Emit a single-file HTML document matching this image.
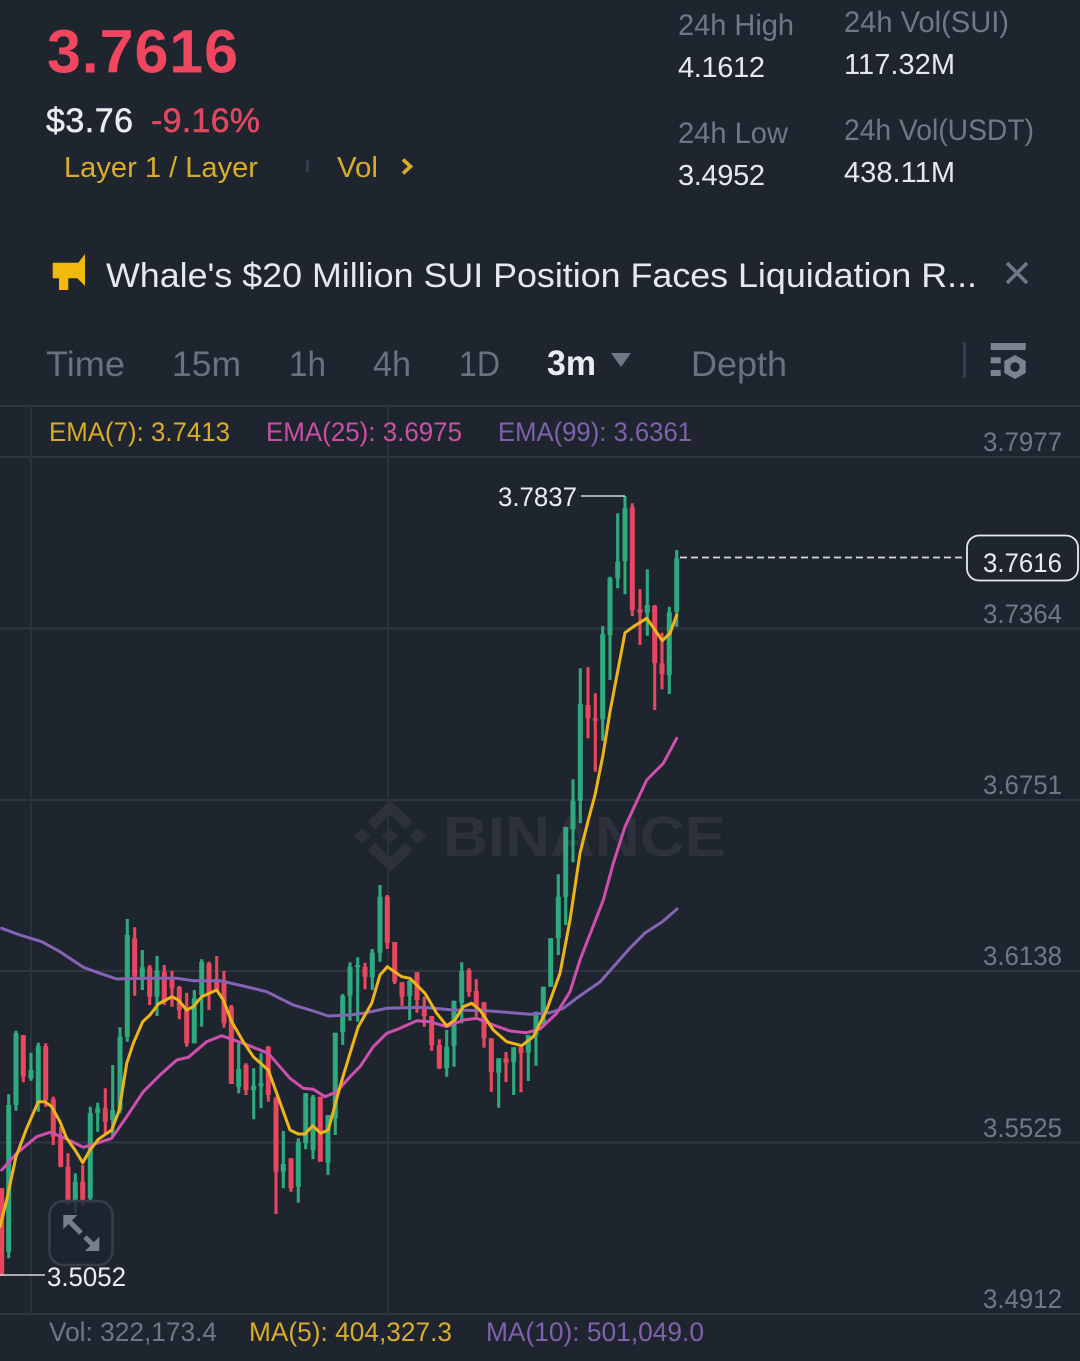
<!DOCTYPE html>
<html lang="en"><head><meta charset="utf-8"><title>SUI/USDT chart</title>
<style>
html,body{margin:0;padding:0;background:#1f252f;}
svg{display:block;font-family:"Liberation Sans",sans-serif;}
</style></head><body>
<svg width="1080" height="1361" viewBox="0 0 1080 1361" xmlns="http://www.w3.org/2000/svg">
<rect width="1080" height="1361" fill="#1f252f"/>

<!-- header -->
<g>
<text x="47" y="72.500" font-size="61" font-weight="700" fill="#f1465f" textLength="191" lengthAdjust="spacing">3.7616</text>
<text x="46" y="132" font-size="34" fill="#eaecef" stroke="#eaecef" stroke-width=".5" textLength="87" lengthAdjust="spacing">$3.76</text>
<text x="151" y="132" font-size="34" fill="#e2475f" stroke="#e2475f" stroke-width=".5" textLength="109" lengthAdjust="spacing">-9.16%</text>
<text x="64" y="177" font-size="29" fill="#d9ad2b" textLength="194" lengthAdjust="spacingAndGlyphs">Layer 1 / Layer</text>
<rect x="296" y="160" width="3" height="12" fill="#363c47" transform="translate(10,0)"/>
<text x="337" y="177" font-size="29" fill="#d9ad2b" textLength="41" lengthAdjust="spacingAndGlyphs">Vol</text>
<path d="M403 159.500L410.500 166.500L403 173.500" fill="none" stroke="#d9ad2b" stroke-width="3.600"/>

<text x="678" y="35" font-size="30" fill="#6f7885" textLength="116" lengthAdjust="spacingAndGlyphs">24h High</text>
<text x="678" y="77" font-size="29" fill="#e6e8ec" textLength="87" lengthAdjust="spacing">4.1612</text>
<text x="844" y="32" font-size="30" fill="#6f7885" textLength="165" lengthAdjust="spacingAndGlyphs">24h Vol(SUI)</text>
<text x="844" y="74" font-size="29" fill="#e6e8ec" textLength="111" lengthAdjust="spacing">117.32M</text>
<text x="678" y="143" font-size="30" fill="#6f7885" textLength="110" lengthAdjust="spacingAndGlyphs">24h Low</text>
<text x="678" y="185" font-size="29" fill="#e6e8ec" textLength="87" lengthAdjust="spacing">3.4952</text>
<text x="844" y="140" font-size="30" fill="#6f7885" textLength="190" lengthAdjust="spacingAndGlyphs">24h Vol(USDT)</text>
<text x="844" y="182" font-size="29" fill="#e6e8ec" textLength="111" lengthAdjust="spacing">438.11M</text>
</g>

<!-- announcement -->
<path d="M52.700 262.700H78.300L85 254V286L77.300 278.300H68.300V290H59V278.300H52.700Z" fill="#f0b90b"/>
<text x="106" y="287" font-size="34.500" fill="#e6e8ec" textLength="871" lengthAdjust="spacingAndGlyphs">Whale's $20 Million SUI Position Faces Liquidation R...</text>
<path d="M1007 263L1027 283M1027 263L1007 283" stroke="#6f7885" stroke-width="3.600" fill="none"/>

<!-- tabs -->
<g font-size="35" fill="#69727f">
<text x="46" y="376" textLength="79" lengthAdjust="spacingAndGlyphs">Time</text>
<text x="172" y="376" textLength="69" lengthAdjust="spacingAndGlyphs">15m</text>
<text x="289" y="376" textLength="37" lengthAdjust="spacingAndGlyphs">1h</text>
<text x="373" y="376" textLength="38" lengthAdjust="spacingAndGlyphs">4h</text>
<text x="459" y="376" textLength="41" lengthAdjust="spacingAndGlyphs">1D</text>
<text x="691" y="376" textLength="96" lengthAdjust="spacingAndGlyphs">Depth</text>
</g>
<text x="547" y="375" font-size="35" font-weight="700" fill="#eaecef" textLength="49" lengthAdjust="spacingAndGlyphs">3m</text>
<path d="M611 353H631L621 367Z" fill="#6f7885"/>
<rect x="963" y="342" width="3" height="36" fill="#373d49"/>
<g fill="#7b8492">
<rect x="990.700" y="343" width="35" height="7"/>
<rect x="990.700" y="357.300" width="10" height="6"/>
<rect x="990.700" y="370" width="10" height="6"/>
<path d="M1015 355L1025.700 361V373L1015 379L1004.300 373V361Z"/>
</g>
<circle cx="1015" cy="367" r="4.700" fill="#1f252f"/>

<!-- grid -->
<g stroke="#30363f" stroke-width="2" fill="none">
<path d="M0 406H1080M0 457H1080M0 628.500H1080M0 800H1080M0 971H1080M0 1142.500H1080M0 1314H1080"/>
<path d="M31 406V1314M388 406V1314" stroke="#2b313b"/>
</g>

<!-- watermark -->
<g fill="#2c313b">
<path d="M390 800L412.700 821.700L405 829.300L390 815L375 829.300L367.300 821.700Z"/>
<path d="M390 872L412.700 850.300L405 842.700L390 857L375 842.700L367.300 850.300Z"/>
<path d="M390 828L398 836L390 844L382 836Z"/>
<path d="M362 828L370 836L362 844L354 836Z"/>
<path d="M418 828L426 836L418 844L410 836Z"/>
<text x="443" y="856" font-size="57" font-weight="700" textLength="283" lengthAdjust="spacingAndGlyphs">BINANCE</text>
</g>

<!-- candle wicks -->
<path fill="none" stroke="#2fa97e" stroke-width="3.100" d="M8.700 1094.300V1258.300M16 1030.700V1110.700M31 1052.700V1080.700M38.300 1042.700V1111.700M75.300 1173.300V1213M90.300 1106.700V1203.300M97.700 1102.700V1131.700M112.700 1065V1136.700M120 1027.300V1113.300M127.300 919V1041.700M142.300 950V990M157 956V1016M194.300 990V1043.300M201.700 959.300V1026.700M238.700 1043.300V1093.300M253.700 1068.300V1119.300M261 1053.300V1108.300M283.300 1131V1188.300M298.300 1138.300V1202.700M305.700 1093.300V1149.300M313 1095V1159.300M328 1115V1175M335.300 1032.700V1135M342.700 994V1045M350 962.300V1020.700M357.700 957.300V1021.700M372.300 949V990M380 885V961.700M409.700 980V1020M446.700 1030V1076.700M454 1000.700V1066.700M461.700 962.300V1023.300M498.700 1058.300V1107.700M513.700 1047.300V1095M528.300 1035V1081M536 1011.700V1065.700M543.300 986.700V1026.700M550.700 938.300V986.700M558.300 874.300V955M565.700 827V925M573 779.300V862.300M580.300 668.300V823.300M602.700 626V740.700M610 576.700V680M617.700 513.300V588.300M625 496V594.300M647.300 569.300V635.700M669.300 606.700V694M676.700 550V626.700"/>
<path fill="none" stroke="#e8485f" stroke-width="3.100" d="M1.700 1188V1276M23.300 1035V1082.300M45.700 1043.300V1106.700M53.300 1096.700V1145M60.700 1126.700V1167.300M68 1153.300V1205M82.700 1165V1205M105.300 1088.300V1133.300M134.700 927.300V995.700M149.700 965V1005M164.300 965V1005M172 970.700V1006.700M179.300 986V1019.300M186.700 992.700V1046.700M209 961.700V1010M216.700 956V991.700M224 970.700V1027.700M231.300 1005V1084M246 1063.300V1095M268.300 1046V1101.700M276 1096.700V1214M291 1158.300V1191.700M320.300 1096.700V1161.700M365 962.700V989.300M387.300 895V949M394.700 942V984M402 982.300V1006M417 972.300V1012.700M424.300 996.700V1026.700M431.700 1016V1050.700M439.300 1039.300V1069M469 968.300V996.700M476.300 979.300V1016.700M484 1002.300V1047.700M491.300 1038.300V1091.700M506 1052V1082M521 1047.300V1092.300M588 667.300V738.300M595.300 693.300V771.700M632.300 503.300V616M640 589.300V645M654.700 605V710M662 632.700V689.300"/>
<!-- candle bodies -->
<path fill="none" stroke="#2fa97e" stroke-width="5" d="M8.700 1105V1251.700M16 1033.300V1105M31 1070V1078.300M38.300 1046V1103.300M75.300 1181.700V1200M90.300 1113.300V1198.300M97.700 1107.700V1113.300M112.700 1110V1120M120 1036.700V1110M127.300 935V1036.700M142.300 967.300V976.700M157 970.700V996.700M194.300 998.300V1043.300M201.700 961.700V995M238.700 1069V1086.700M253.700 1086V1090M261 1083.300V1086M283.300 1164V1171.700M298.300 1141.700V1186.700M305.700 1093.300V1143.300M313 1096.700V1150M328 1115V1162.700M335.300 1032.700V1118.300M342.700 996V1032.300M350 966.700V995.700M357.700 965V967.300M372.300 952.700V977.300M380 896.700V952.700M409.700 980.700V996M446.700 1046.700V1068.300M454 1000.700V1046M461.700 971V1002.700M498.700 1058.300V1072.700M513.700 1047.300V1062M528.300 1035V1052.700M536 1011.700V1035M543.300 986.700V1023.300M550.700 938.300V986.700M558.300 896.700V938.300M565.700 827V896.700M573 800.700V829.300M580.300 704V800.700M602.700 634V719.300M610 578.300V635M617.700 561.700V578.300M625 508.300V561M647.300 605V612.700M669.300 612.300V675M676.700 558.300V611.700"/>
<path fill="none" stroke="#e8485f" stroke-width="5" d="M1.700 1188V1275M23.300 1035V1076.700M45.700 1046V1100M53.300 1099.300V1136.700M60.700 1136.700V1166.700M68 1166.700V1201.700M82.700 1181.700V1200M105.300 1108.300V1121.700M134.700 938.300V976.700M149.700 967.300V996.700M164.300 971.700V1001.700M172 980V988.300M179.300 987.300V1010M186.700 1010V1043.300M209 963.300V993.300M216.700 980V990M224 980V1023.300M231.300 1006.700V1084M246 1065V1090M268.300 1046.700V1095M276 1098.300V1171.700M291 1158.300V1188.300M320.300 1096.700V1161.700M365 966.700V976.700M387.300 896.700V942.700M394.700 942V981.700M402 982.300V996.700M417 972.300V1000M424.300 1006.700V1016M431.700 1016V1045M439.300 1045V1068.300M469 970V991.700M476.300 991V1006.700M484 1002.300V1038.300M491.300 1038.300V1072.300M506 1058.300V1062.700M521 1047.300V1053.300M588 705V718.300M595.300 718.300V720.700M632.300 507.300V610M640 609.300V612.700M654.700 606V663.300M662 663.300V674.300"/>

<!-- EMA lines -->
<g fill="none" stroke-width="3" stroke-linejoin="round" stroke-linecap="round">
<path stroke="#8563b5" d="M1.700 928.300L20 935L41.700 941.700L60 951.700L83.300 967.300L100 973.300L116.700 979L150 978.300L176.700 978.300L193.300 980.700L220 980.700L243.300 986L266.700 991.700L293.300 1005L313.300 1011L328.300 1016L350 1015L363.300 1013.300L386.700 1008.300L423.300 1007.300L453.300 1010L486.700 1010.700L530 1014.300L550 1012.700L563.300 1008.300L580 995.700L600 982L615 965L630 948L645 933L662 922L677 909"/>
<path stroke="#cf4fae" d="M1.700 1170L16.700 1153.300L36.700 1136.700L50 1132.300L63.300 1137.300L83.300 1147.300L96.700 1143.300L111.700 1138.300L126.700 1116.700L143.300 1091.700L160 1075L176.700 1060L188.300 1057.300L206.700 1041.700L221.700 1035.700L243.300 1043.300L268.300 1053.300L290 1078.300L303.300 1088.300L313.300 1089.300L325 1096.700L336.700 1091.700L350 1076.700L360 1066.700L373.300 1046.700L386.700 1033.300L400 1028.300L416.700 1020.700L430 1021.700L446.700 1026.700L463.300 1020L476.700 1018.300L493.300 1025L510 1031L526.700 1032.700L540 1029L556.700 1013.300L570 991.700L580 960L603.300 900L613.300 863.300L625 826.700L646.700 780L663.300 763.300L676.700 738.300"/>
<path stroke="#eeb41c" d="M0 1226.700L6.700 1200L16 1156.700L26.700 1128.300L38.300 1101.700L45 1101.700L51.700 1106.700L60 1121.700L66.700 1138.300L75 1150L82.700 1162.700L90 1150L98.300 1139.300L111.700 1130L119.300 1110L126.700 1063.300L133.300 1043.300L142.700 1021.700L150 1015L158.300 1004L172 996.700L178.300 1000L186.700 1010L193.300 1006.700L201.700 996.700L216.700 990L223.300 1000L231.700 1021.700L243.300 1041.700L253.300 1056.700L268.300 1070L276.700 1093.300L290 1130L298.300 1134L305 1134L312.700 1125.700L320.700 1133.300L328.300 1130L340 1086.700L350 1053.300L358.300 1026.700L371.700 1003.300L380 975L387.300 966.700L401.700 976.700L410 978.300L425 993.300L436.700 1013.300L446.700 1025.700L455 1020L463.300 1006.700L471.700 1003.300L480 1010L493.300 1030L506.700 1041.700L521.700 1045.700L533.300 1036.700L546.700 1010L560 973.300L570 920L580 853.300L588.300 820L595 795L602.700 756.700L610 711.700L617.300 673.300L625 632.700L633.300 626.700L646.700 618.300L655 630L662.300 640.700L670 633.300L676.700 615"/>
</g>

<!-- legends -->
<g font-size="27">
<text x="49" y="441" fill="#d9ad2b" textLength="181" lengthAdjust="spacingAndGlyphs">EMA(7): 3.7413</text>
<text x="266" y="441" fill="#cc4fa6" textLength="196" lengthAdjust="spacingAndGlyphs">EMA(25): 3.6975</text>
<text x="498" y="441" fill="#8061ad" textLength="194" lengthAdjust="spacingAndGlyphs">EMA(99): 3.6361</text>
<text x="49" y="1341" fill="#6f7885" textLength="168" lengthAdjust="spacingAndGlyphs">Vol: 322,173.4</text>
<text x="249" y="1341" fill="#d9ad2b" textLength="203" lengthAdjust="spacingAndGlyphs">MA(5): 404,327.3</text>
<text x="486" y="1341" fill="#8061ad" textLength="218" lengthAdjust="spacingAndGlyphs">MA(10): 501,049.0</text>
</g>

<!-- axis -->
<g font-size="27" fill="#6f7885">
<text x="983" y="451" textLength="79" lengthAdjust="spacingAndGlyphs">3.7977</text>
<text x="983" y="623" textLength="79" lengthAdjust="spacingAndGlyphs">3.7364</text>
<text x="983" y="794" textLength="79" lengthAdjust="spacingAndGlyphs">3.6751</text>
<text x="983" y="965" textLength="79" lengthAdjust="spacingAndGlyphs">3.6138</text>
<text x="983" y="1137" textLength="79" lengthAdjust="spacingAndGlyphs">3.5525</text>
<text x="983" y="1308" textLength="79" lengthAdjust="spacingAndGlyphs">3.4912</text>
</g>

<!-- price line & label -->
<path d="M680 557.500H962" stroke="#d5d8dd" stroke-width="1.800" stroke-dasharray="7 4" fill="none"/>
<rect x="967" y="535.500" width="111" height="45" rx="12" fill="#1f252f" stroke="#e6e8ec" stroke-width="1.800"/>
<text x="983" y="572" font-size="27" fill="#eaecef" textLength="79" lengthAdjust="spacingAndGlyphs">3.7616</text>

<!-- high / low -->
<path d="M581 496H625" stroke="#d5d8dd" stroke-width="1.600" fill="none"/>
<text x="498" y="506" font-size="27" fill="#eaecef" textLength="79" lengthAdjust="spacingAndGlyphs">3.7837</text>
<path d="M0 1275H45" stroke="#d5d8dd" stroke-width="1.600" fill="none"/>
<text x="47" y="1286" font-size="27" fill="#eaecef" textLength="79" lengthAdjust="spacingAndGlyphs">3.5052</text>

<!-- expand button -->
<rect x="49.500" y="1201" width="63" height="64" rx="14" fill="#1f252f" fill-opacity=".82" stroke="#383e49" stroke-width="2.500"/>
<g fill="#777f8c">
<path d="M63.300 1215H77.300L63.300 1229.300Z"/>
<path d="M99.300 1251V1236.700L85 1251Z"/>
</g>
<path d="M69 1221L81 1233M85 1237L93 1245" stroke="#777f8c" stroke-width="5" fill="none"/>
</svg>
</body></html>
